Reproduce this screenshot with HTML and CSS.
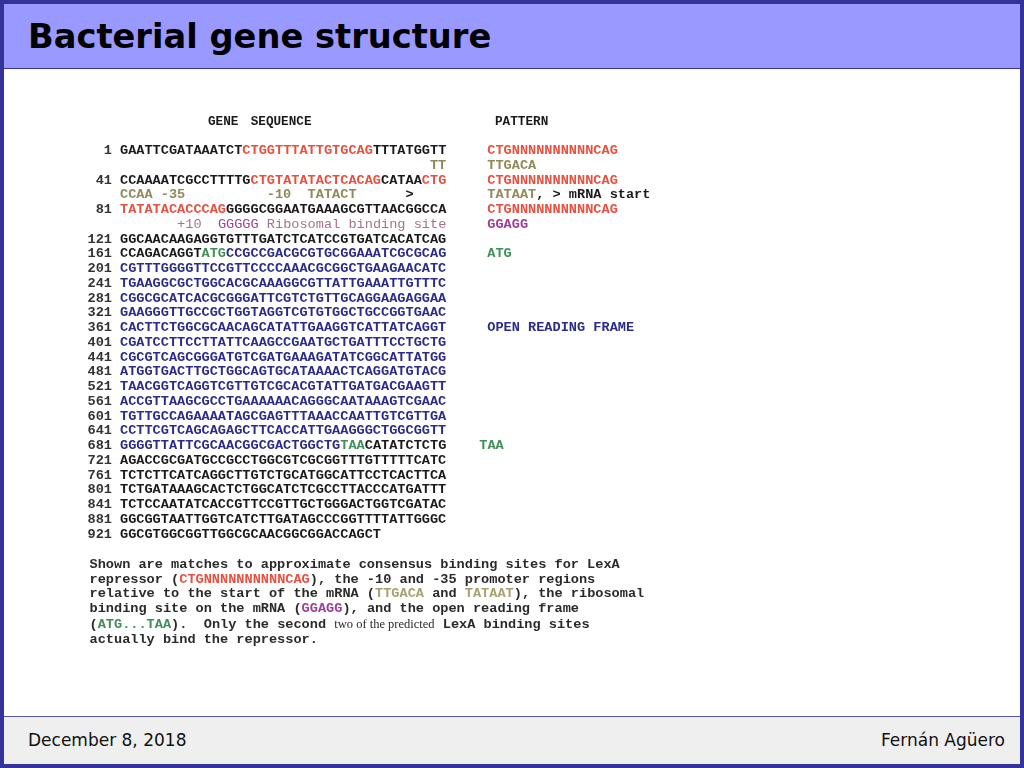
FILE: index.html
```html
<!DOCTYPE html>
<html lang="en">
<head>
<meta charset="utf-8">
<title>Bacterial gene structure</title>
<link rel="stylesheet" href="styles.css">
</head>
<body>
<div class="frame">
  <header class="title-bar"><h1 class="title">Bacterial gene structure</h1></header>
  <main class="content">
    <div class="scan">
      <div class="heads"><span class="head-gene">GENE SEQUENCE</span><span class="head-pattern">PATTERN</span></div>
      <div class="rows">
        <div class="row"><span class="num">1</span><span class="seq">GAATTCGATAAATCT<span class="red">CTGGTTTATTGTGCAG</span>TTTATGGTT</span><span class="pat red">CTGNNNNNNNNNNCAG</span></div>
        <div class="row"><span class="num"></span><span class="seq tan">                                      TT</span><span class="pat tan">TTGACA</span></div>
        <div class="row"><span class="num">41</span><span class="seq">CCAAAATCGCCTTTTG<span class="red">CTGTATATACTCACAG</span>CATAA<span class="red">CTG</span></span><span class="pat red">CTGNNNNNNNNNNCAG</span></div>
        <div class="row"><span class="num"></span><span class="seq tan">CCAA -35          -10  TATACT      <span class="ink">&gt;</span></span><span class="pat"><span class="tan">TATAAT</span>, &gt; mRNA start</span></div>
        <div class="row"><span class="num">81</span><span class="seq"><span class="red">TATATACACCCAG</span>GGGGCGGAATGAAAGCGTTAACGGCCA</span><span class="pat red">CTGNNNNNNNNNNCAG</span></div>
        <div class="row"><span class="num"></span><span class="seq mauve">       +10  <span class="purple">GGGGG</span> Ribosomal binding site</span><span class="pat purple">GGAGG</span></div>
        <div class="row"><span class="num">121</span><span class="seq">GGCAACAAGAGGTGTTTGATCTCATCCGTGATCACATCAG</span><span class="pat"></span></div>
        <div class="row"><span class="num">161</span><span class="seq">CCAGACAGGT<span class="green">ATG</span><span class="blue">CCGCCGACGCGTGCGGAAATCGCGCAG</span></span><span class="pat green">ATG</span></div>
        <div class="row"><span class="num">201</span><span class="seq blue">CGTTTGGGGTTCCGTTCCCCAAACGCGGCTGAAGAACATC</span><span class="pat"></span></div>
        <div class="row"><span class="num">241</span><span class="seq blue">TGAAGGCGCTGGCACGCAAAGGCGTTATTGAAATTGTTTC</span><span class="pat"></span></div>
        <div class="row"><span class="num">281</span><span class="seq blue">CGGCGCATCACGCGGGATTCGTCTGTTGCAGGAAGAGGAA</span><span class="pat"></span></div>
        <div class="row"><span class="num">321</span><span class="seq blue">GAAGGGTTGCCGCTGGTAGGTCGTGTGGCTGCCGGTGAAC</span><span class="pat"></span></div>
        <div class="row"><span class="num">361</span><span class="seq blue">CACTTCTGGCGCAACAGCATATTGAAGGTCATTATCAGGT</span><span class="pat blue">OPEN READING FRAME</span></div>
        <div class="row"><span class="num">401</span><span class="seq blue">CGATCCTTCCTTATTCAAGCCGAATGCTGATTTCCTGCTG</span><span class="pat"></span></div>
        <div class="row"><span class="num">441</span><span class="seq blue">CGCGTCAGCGGGATGTCGATGAAAGATATCGGCATTATGG</span><span class="pat"></span></div>
        <div class="row"><span class="num">481</span><span class="seq blue">ATGGTGACTTGCTGGCAGTGCATAAAACTCAGGATGTACG</span><span class="pat"></span></div>
        <div class="row"><span class="num">521</span><span class="seq blue">TAACGGTCAGGTCGTTGTCGCACGTATTGATGACGAAGTT</span><span class="pat"></span></div>
        <div class="row"><span class="num">561</span><span class="seq blue">ACCGTTAAGCGCCTGAAAAAACAGGGCAATAAAGTCGAAC</span><span class="pat"></span></div>
        <div class="row"><span class="num">601</span><span class="seq blue">TGTTGCCAGAAAATAGCGAGTTTAAACCAATTGTCGTTGA</span><span class="pat"></span></div>
        <div class="row"><span class="num">641</span><span class="seq blue">CCTTCGTCAGCAGAGCTTCACCATTGAAGGGCTGGCGGTT</span><span class="pat"></span></div>
        <div class="row"><span class="num">681</span><span class="seq"><span class="blue">GGGGTTATTCGCAACGGCGACTGGCTG</span><span class="green">TAA</span>CATATCTCTG</span><span class="pat green stop">TAA</span></div>
        <div class="row"><span class="num">721</span><span class="seq">AGACCGCGATGCCGCCTGGCGTCGCGGTTTGTTTTTCATC</span><span class="pat"></span></div>
        <div class="row"><span class="num">761</span><span class="seq">TCTCTTCATCAGGCTTGTCTGCATGGCATTCCTCACTTCA</span><span class="pat"></span></div>
        <div class="row"><span class="num">801</span><span class="seq">TCTGATAAAGCACTCTGGCATCTCGCCTTACCCATGATTT</span><span class="pat"></span></div>
        <div class="row"><span class="num">841</span><span class="seq">TCTCCAATATCACCGTTCCGTTGCTGGGACTGGTCGATAC</span><span class="pat"></span></div>
        <div class="row"><span class="num">881</span><span class="seq">GGCGGTAATTGGTCATCTTGATAGCCCGGTTTTATTGGGC</span><span class="pat"></span></div>
        <div class="row"><span class="num">921</span><span class="seq">GGCGTGGCGGTTGGCGCAACGGCGGACCAGCT</span><span class="pat"></span></div>
      </div>
      <div class="caption">
        <div class="cap-line">Shown are matches to approximate consensus binding sites for LexA</div>
        <div class="cap-line">repressor (<span class="red">CTGNNNNNNNNNNCAG</span>), the -10 and -35 promoter regions</div>
        <div class="cap-line">relative to the start of the mRNA (<span class="tan-light">TTGACA</span> and <span class="tan-light">TATAAT</span>), the ribosomal</div>
        <div class="cap-line">binding site on the mRNA (<span class="purple">GGAGG</span>), and the open reading frame</div>
        <div class="cap-line">(<span class="green">ATG...TAA</span>).  Only the second <span class="serif">two of the predicted</span> LexA binding sites</div>
        <div class="cap-line cap-last">actually bind the repressor.</div>
      </div>
    </div>
  </main>
  <footer class="foot"><span>December 8, 2018</span><span>Fernán Agüero</span></footer>
</div>
</body>
</html>
```
FILE: styles.css
```css
* { box-sizing: border-box; }
html, body { margin: 0; padding: 0; }
body { width: 1024px; height: 768px; overflow: hidden; background: #fff; }
.frame {
  width: 1024px; height: 768px;
  border: 4px solid #333399;
  display: flex; flex-direction: column;
  font-family: "DejaVu Sans", Verdana, sans-serif;
}
.title-bar {
  height: 65px; flex: none;
  background: #9999ff;
  border-bottom: 1px solid #333399;
  padding: 2px 24px 0;
  display: flex; align-items: center;
}
.title { margin: 0; font-size: 33.7px; font-weight: 700; color: #000; line-height: 1; }
.content { flex: 1; background: #fff; min-height: 0; overflow: hidden; }
.scan {
  padding: 46px 0 0 83.5px;
  font-family: "Liberation Mono", monospace;
  font-size: 13.6px;
  font-weight: 700;
  color: #1a1a1a;
  filter: blur(0.7px);
}
.heads { display: flex; height: 14px; line-height: 14px; font-size: 12.7px; white-space: pre; margin-bottom: 15px; }
.head-gene { margin-left: 120.5px; width: 287px; word-spacing: 4.6px; }
.rows { display: flex; flex-direction: column; }
.row {
  display: grid;
  grid-template-columns: 3ch 40ch 1fr;
  column-gap: 8px;
  height: 14.76px;
  line-height: 14.76px;
  white-space: pre;
}
.num { text-align: right; color: #333; }
.pat { margin-left: 33px; }
.stop { margin-left: 25px; }
.red { color: #e8503f; }
.tan { color: #8f8a58; }
.tan-light { color: #a8a070; }
.ink { color: #111; }
.mauve { color: #a8708f; font-weight: 400; }
.purple { color: #9c3f98; }
.green { color: #3f8f58; }
.blue { color: #2c2c88; }
.caption { margin-top: 16px; margin-left: 2px; color: #2a2a2a; }
.cap-line { white-space: pre; height: 14.6px; line-height: 14.6px; }
.cap-last { margin-top: 1.5px; }
.serif { font-family: "Liberation Serif", serif; font-weight: 400; font-size: 12.5px; }
.foot {
  flex: none; height: 48px;
  background: #efefef;
  border-top: 1px solid #5555aa;
  padding: 0 15px 1px 24px;
  display: flex; justify-content: space-between; align-items: center;
  font-size: 17px; color: #111;
}
```
